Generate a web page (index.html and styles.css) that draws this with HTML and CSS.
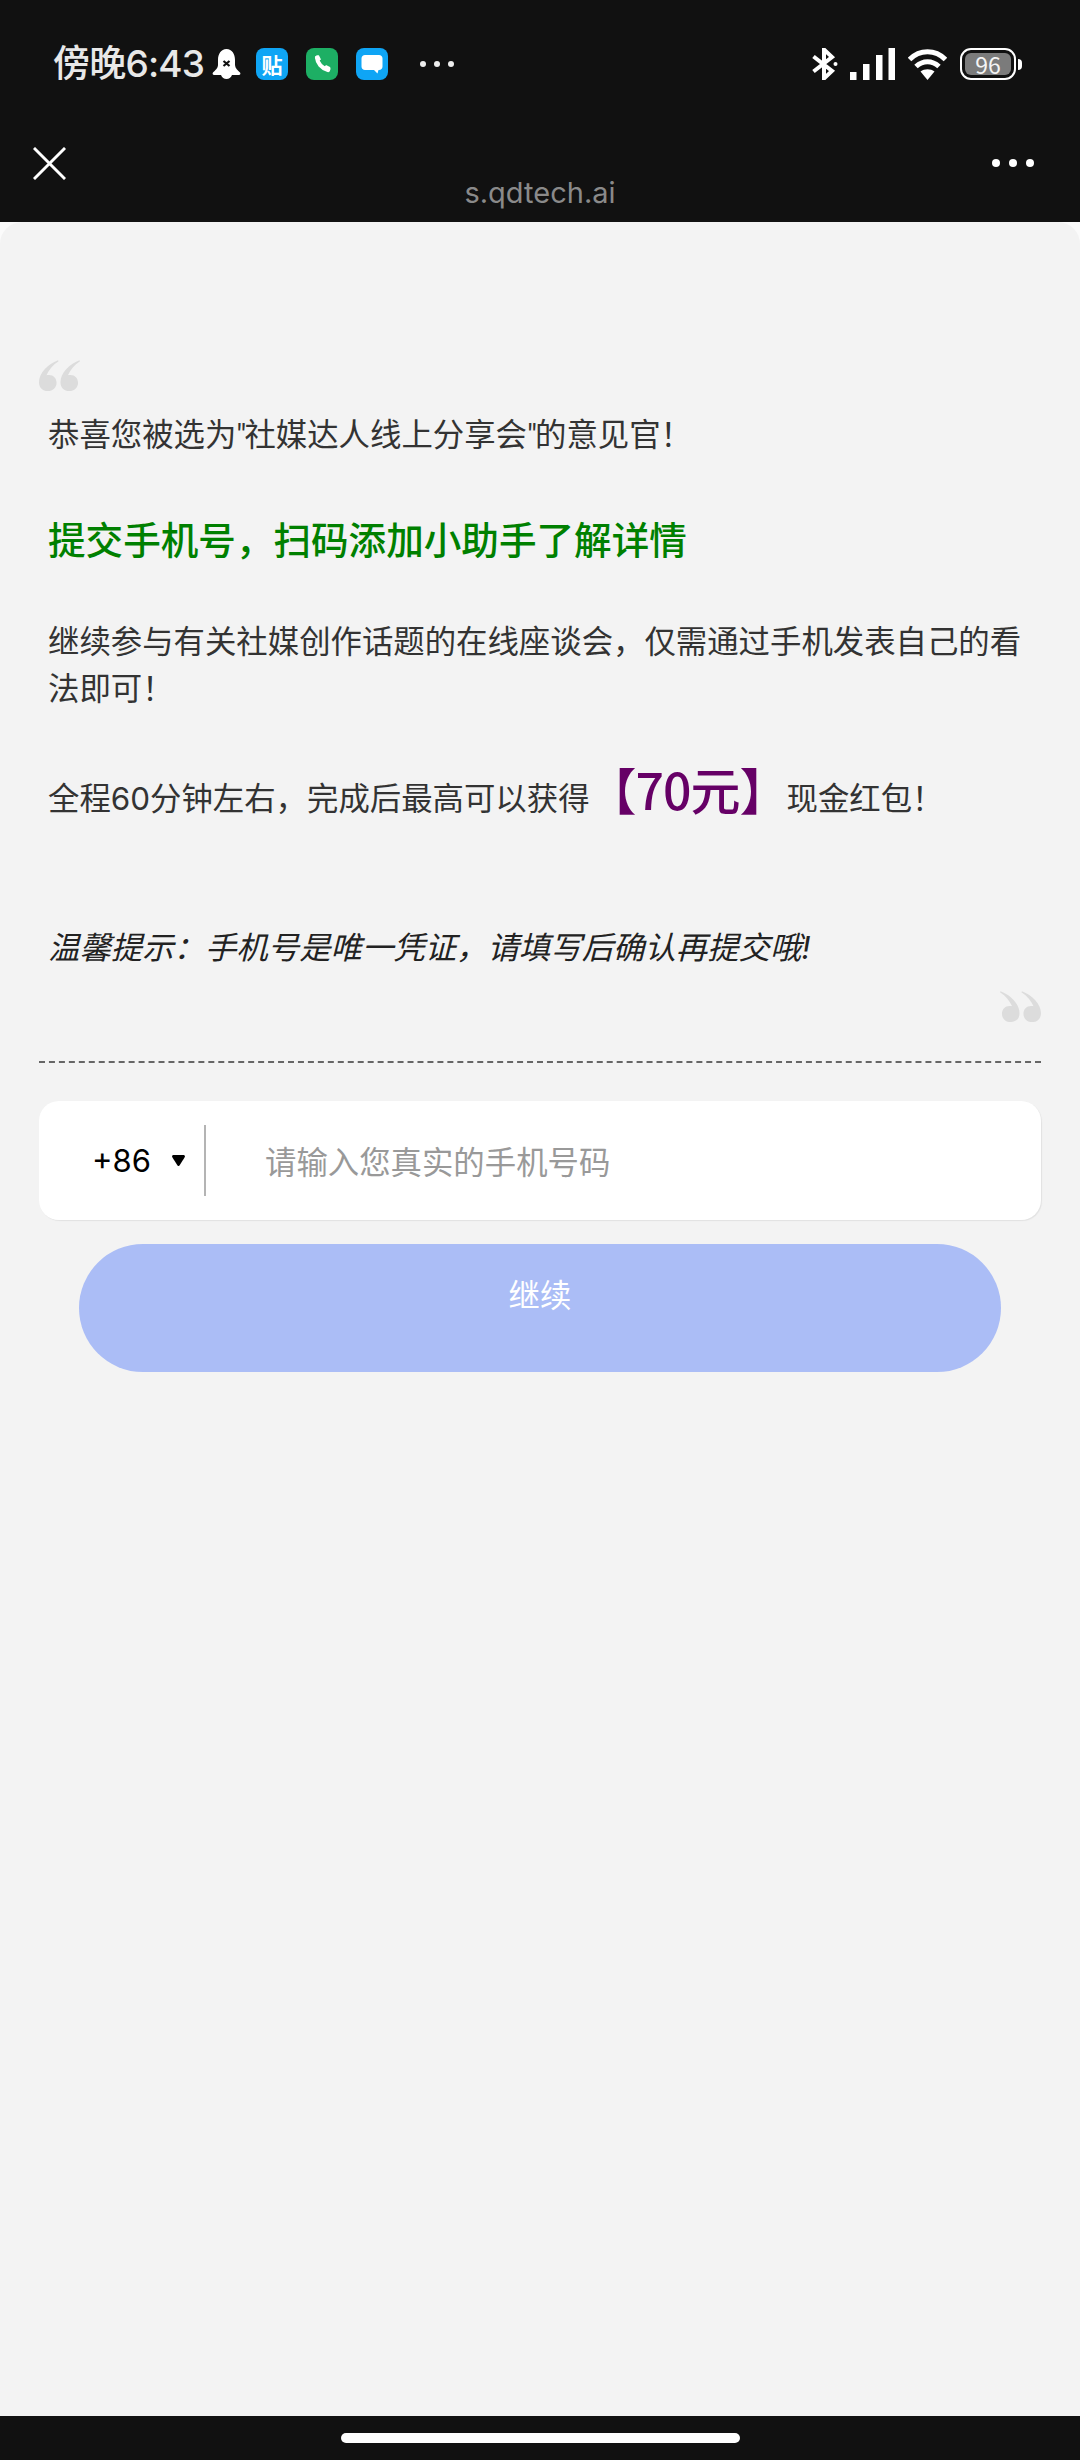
FILE: index.html
```html
<!DOCTYPE html>
<html lang="zh-CN">
<head>
<meta charset="utf-8">
<title>s.qdtech.ai</title>
<link rel="stylesheet" href="styles.css">
</head>
<body>
<div class="phone">
  <header class="top">
    <div class="status">
      <div class="status-left">
        <span class="time">傍晚6:43</span>
        <svg class="bell" viewBox="0 0 29 32"><path fill="#fff" d="M14.500 1C9 1 6 6 6 12v5c0 3-3 5.500-5 7.500-1 1 0 2.500 1 2.500h7c1 2.500 3 4 5.500 4s4.500-1.500 5.500-4h7c1 0 2-1.500 1-2.500-2-2-5-4.500-5-7.500v-5C23 6 20 1 14.500 1z"/><path stroke="#111" stroke-width="2.200" d="M11.500 13l6 5M17.500 13l-6 5"/></svg>
        <span class="app app-blue app-tie"><span class="tie">贴</span></span>
        <span class="app app-green"><svg viewBox="0 0 32 32"><path fill="none" stroke="#fff" stroke-width="4.200" stroke-linecap="round" d="M11 9.500c.5 5.500 4.500 10.500 11 12.500"/><path fill="#fff" d="M9 9.500c0-1.500 3-3 4-2l2 4-3.500 2zM17.500 20l2.500-3 4 2c1 1 .5 4-1 4.500z"/></svg></span>
        <span class="app app-blue"><svg viewBox="0 0 32 32"><path fill="#fff" d="M9 7h14c2 0 3.500 1.500 3.500 3.500v8c0 2-1.500 3.500-3.500 3.500h-.5l-1 3.500-3.500-3.500H9c-2 0-3.500-1.500-3.500-3.500v-8C5.500 8.500 7 7 9 7z"/></svg></span>
        <span class="more-status"><i></i><i></i><i></i></span>
      </div>
      <div class="status-right">
        <svg class="bt" viewBox="0 0 26 32"><path fill="none" stroke="#fff" stroke-width="4" d="M1.500 8.500L20 23l-8 7.500V1.500l8 7.500L1.500 23.500"/><circle cx="23.500" cy="16" r="2" fill="#fff"/></svg>
        <svg class="signal" viewBox="0 0 45 32"><path fill="#fff" d="M0 24h6.500v8H0zM13 16h6.500v16H13zM26 7h6.500v25H26zM38.500 0H45v32h-6.500z"/></svg>
        <svg class="wifi" viewBox="0 0 39 32"><path fill="none" stroke="#fff" stroke-width="5" d="M1.500 11.500C11.500 1 27.500 1 37.500 11.500M8 18.500c7-6.500 16-6.500 23 0"/><path fill="#fff" d="M12.500 23.500c4-3 10-3 14 0l-7 8.500z"/></svg>
        <div class="battery"><div class="cell"><span>96</span></div><i></i></div>
      </div>
    </div>
    <div class="nav">
      <svg class="close" viewBox="0 0 34 34"><path stroke="#fff" stroke-width="3" d="M1 1l32 32M33 1L1 33"/></svg>
      <div class="url">s.qdtech.ai</div>
      <div class="more"><i></i><i></i><i></i></div>
    </div>
  </header>
  <div class="sheet">
  <main class="page">
    <svg class="quote" viewBox="0 0 42 33"><path fill="#dcdcdc" d="M19.500 1C9 5 0 14 0 23.500c0 5.500 3.800 9 9 9s9-3.500 9-8.500-3.800-8.500-8.500-8c-.6 0-1.300.1-1.900.3C10 11 14 6 20 2zM41.500 1C31 5 22 14 22 23.500c0 5.500 3.800 9 9 9s9-3.500 9-8.500-3.800-8.500-8.500-8c-.6 0-1.300.1-1.900.3C32 11 36 6 42 2z"/></svg>
    <div class="copy">
      <p class="line first">恭喜您被选为<span class="q">"</span>社媒达人线上分享会<span class="q">"</span>的意见官！</p>
      <p class="headline">提交手机号，扫码添加小助手了解详情</p>
      <p class="para">继续参与有关社媒创作话题的在线座谈会，仅需通过手机发表自己的看法即可！</p>
      <p class="reward">全程60分钟左右，完成后最高可以获得<strong>【70元】</strong>现金红包！</p>
      <p class="hint">温馨提示：手机号是唯一凭证，请填写后确认再提交哦!</p>
    </div>
    <svg class="quote quote-end" viewBox="0 0 42 33"><path fill="#dcdcdc" d="M19.500 1C9 5 0 14 0 23.500c0 5.500 3.800 9 9 9s9-3.500 9-8.500-3.800-8.500-8.500-8c-.6 0-1.300.1-1.900.3C10 11 14 6 20 2zM41.500 1C31 5 22 14 22 23.500c0 5.500 3.800 9 9 9s9-3.500 9-8.500-3.800-8.500-8.500-8c-.6 0-1.300.1-1.900.3C32 11 36 6 42 2z"/></svg>
    <div class="dash"></div>
    <div class="field">
      <div class="code"><span>+86</span><svg class="caret" viewBox="0 0 13 11"><path fill="#000" d="M1.500 0h10c1.200 0 1.800 1.300 1.200 2.300L7.500 10.500c-.5.700-1.500.7-2 0L.3 2.300C-.3 1.300.3 0 1.500 0z"/></svg></div>
      <div class="placeholder">请输入您真实的手机号码</div>
    </div>
    <div class="submit">继续</div>
  </main>
  </div>
  <footer class="bottom"><div class="pill"></div></footer>
</div>
</body>
</html>
```
FILE: styles.css
```css
* { box-sizing: border-box; }
html, body { margin: 0; padding: 0; }
body { width: 1080px; height: 2460px; background: #111; overflow: hidden; font-family: "Noto Sans CJK SC", sans-serif; }
p { margin: 0; }
.phone { display: flex; flex-direction: column; height: 2460px; }
.top { height: 222px; background: #111; flex: none; }
.status { padding: 48px 58px 0 53px; display: flex; justify-content: space-between; box-sizing: content-box; height: 32px; }
.status-left, .status-right { display: flex; align-items: center; height: 32px; }
.time { font-family: "Inter", "Noto Sans CJK SC", sans-serif; font-size: 37px; font-weight: 500; letter-spacing: -0.8px; line-height: 32px; color: #e8e8e8; width: 159px; white-space: nowrap; }
.bell { width: 29px; height: 32px; }
.app { width: 32px; height: 32px; border-radius: 8px; margin-left: 18px; display: flex; align-items: center; justify-content: center; }
.app svg { width: 32px; height: 32px; display: block; }
.bell + .app { margin-left: 15px; }
.app-blue { background: #0fa5f5; }
.app-green { background: #1daf64; }
.tie { color: #fff; font-size: 21px; line-height: 32px; font-weight: 700; }
.more-status { display: flex; gap: 8px; margin-left: 32px; }
.more-status i { width: 6px; height: 6px; border-radius: 50%; background: #eee; display: block; }
.bt { width: 26px; height: 32px; }
.signal { width: 45px; height: 32px; margin-left: 12px; }
.wifi { width: 39px; height: 32px; margin-left: 13px; }
.battery { display: flex; align-items: center; margin-left: 13px; }
.cell { width: 56px; height: 32px; border: 2px solid #fff; border-radius: 11px; padding: 3px; }
.cell span { display: block; height: 22px; background: #7b7b7b; border-radius: 6px; color: #f4f4f4; font-family: "Noto Sans CJK SC", sans-serif; font-weight: 400; font-size: 23px; line-height: 22px; text-align: center; }
.battery i { width: 4px; height: 11px; background: #fff; border-radius: 0 5px 5px 0; margin-left: 2px; }
.nav { position: relative; height: 142px; padding: 67px 46px 0 33px; display: flex; justify-content: space-between; }
.close { width: 33px; height: 33px; }
.url { position: absolute; left: 0; right: 0; top: 96px; text-align: center; font-family: "Inter", sans-serif; font-size: 29px; line-height: 34px; color: #8a8a8a; }
.more { display: flex; gap: 9px; padding-top: 12px; }
.more i { width: 8px; height: 8px; border-radius: 50%; background: #fff; display: block; }
.sheet { flex: 1; background: #fbfbfb; display: flex; }
.page { flex: 1; background: #f3f3f3; border-radius: 22px 22px 0 0; padding: 137px 39px 0; display: flex; flex-direction: column; }
.quote { width: 41px; height: 33px; flex: none; display: block; }
.quote-end { align-self: flex-end; transform: scaleX(-1); margin-top: 18px; }
.copy { padding: 0 9px; color: #333; font-family: "Inter", "Noto Sans CJK SC", sans-serif; font-size: 31.4px; line-height: 47px; }
.q { font-family: "Roboto", sans-serif; letter-spacing: -2px; }
.first { margin-top: 20px; }
.headline { margin-top: 58px; color: #008000; font-size: 37.6px; line-height: 47px; font-weight: 500; }
.para { margin-top: 55px; }
.reward { margin-top: 52px; white-space: nowrap; line-height: 47px; }
.reward strong { color: #660066; font-family: "Noto Sans CJK SC", sans-serif; font-size: 50px; line-height: 47px; font-weight: 500; letter-spacing: -1px; margin: 0 -2px 0 -3px; }
.hint { margin-top: 102px; font-style: italic; font-weight: 400; color: #222; }
.dash { margin-top: 38px; border-top: 2px dashed #666; height: 2px; flex: none; }
.field { margin-top: 38px; height: 119px; background: #fff; border-radius: 20px; display: flex; align-items: center; flex: none; box-shadow: 1px 1px 1px #e2e2e2; }
.code { width: 167px; height: 71px; border-right: 2px solid #b4b4b4; padding-left: 53px; display: flex; align-items: center; color: #000; font-family: "Inter", sans-serif; font-size: 31px; }
.code span { width: 80px; }
.caret { width: 13px; height: 11px; display: block; }
.placeholder { margin-left: 59px; color: #999; font-size: 31.4px; line-height: 47px; }
.submit { margin: 24px 40px 0; height: 128px; flex: none; background: #abbdf6; border-radius: 64px; color: #fff; text-align: center; font-size: 31.4px; line-height: 100px; }
.bottom { height: 44px; flex: none; background: #111; padding-top: 17px; }
.pill { width: 399px; height: 10px; margin: 0 auto; background: #fff; border-radius: 5px; }
```
